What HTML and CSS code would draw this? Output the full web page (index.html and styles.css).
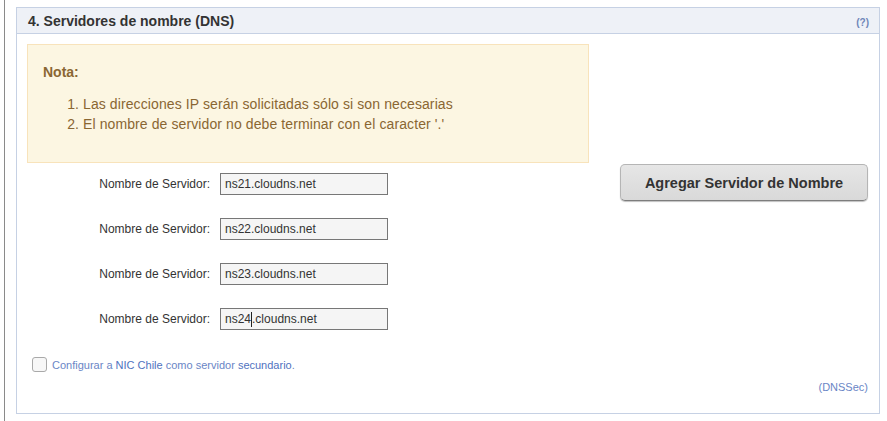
FILE: index.html
```html
<!DOCTYPE html>
<html lang="es">
<head>
<meta charset="utf-8">
<title>Servidores de nombre</title>
<link rel="stylesheet" href="styles.css">
</head>
<body>
<div class="page">
  <section class="panel">
    <header class="panel-head">
      <h2 class="panel-title">4. Servidores de nombre (DNS)</h2>
      <a class="help" href="#">(?)</a>
    </header>
    <div class="panel-body">
      <div class="main">
        <div class="nota">
          <div class="nota-title">Nota:</div>
          <ol class="nota-list">
            <li>Las direcciones IP serán solicitadas sólo si son necesarias</li>
            <li>El nombre de servidor no debe terminar con el caracter '.'</li>
          </ol>
        </div>
        <div class="rows">
          <div class="row"><label class="lbl">Nombre de Servidor:</label><input class="inp" type="text" value="ns21.cloudns.net"></div>
          <div class="row"><label class="lbl">Nombre de Servidor:</label><input class="inp" type="text" value="ns22.cloudns.net"></div>
          <div class="row"><label class="lbl">Nombre de Servidor:</label><input class="inp" type="text" value="ns23.cloudns.net"></div>
          <div class="row"><label class="lbl">Nombre de Servidor:</label><div class="inp fake">ns24<span class="caret"></span>.cloudns.net</div></div>
        </div>
      </div>
      <div class="side">
        <button class="btn" type="button">Agregar Servidor de Nombre</button>
      </div>
    </div>
    <div class="panel-foot">
      <label class="check"><span class="box"></span><span class="check-text">Configurar a <a href="#">NIC Chile</a> como servidor <a href="#">secundario</a>.</span></label>
      <div class="dnssec"><a href="#">(DNSSec)</a></div>
    </div>
  </section>
</div>
</body>
</html>
```
FILE: styles.css
```css
html, body {
  margin: 0;
  padding: 0;
  background: #fff;
  font-family: "Liberation Sans", Arial, sans-serif;
  color: #333;
}
.page {
  margin-left: 4px;
  border-left: 1px solid #8a8a8a;
  padding: 7px 0 0 11px;
  height: 414px;
}
.panel {
  width: 864px;
  box-sizing: border-box;
  border: 1px solid #c6d1e4;
  height: 407px;
  display: flex;
  flex-direction: column;
}
.panel-head {
  height: 25px;
  background: #eef1f7;
  border-bottom: 1px solid #c6d1e4;
  display: flex;
  align-items: center;
  justify-content: space-between;
  padding: 0 10px 0 11px;
}
.panel-title {
  margin: 0;
  font-size: 14px;
  font-weight: bold;
  color: #333;
}
.help {
  font-size: 10px;
  font-weight: bold;
  color: #6f86b9;
  text-decoration: none;
  padding-top: 4px;
}
.panel-body {
  display: flex;
  padding: 10px 10px 0 10px;
}
.main {
  width: 562px;
}
.nota {
  box-sizing: border-box;
  height: 119px;
  background: #fcf6e2;
  border: 1px solid #f8e3bb;
  padding: 18px 0 0 15px;
  color: #8a6632;
}
.nota-title {
  font-size: 14px;
  font-weight: bold;
  line-height: 18px;
}
.nota-list {
  margin: 13px 0 0 0;
  padding-left: 40px;
  font-size: 14px;
  line-height: 20px;
  letter-spacing: 0.1px;
}
.rows {
  display: flex;
  flex-direction: column;
  gap: 23px;
  margin-top: 10px;
}
.row {
  display: flex;
  align-items: center;
  height: 22px;
}
.lbl {
  width: 183px;
  text-align: right;
  font-size: 12px;
  color: #333;
  margin-right: 10px;
}
.inp {
  box-sizing: border-box;
  width: 168px;
  height: 22px;
  border: 1px solid #777;
  background: #f5f5f5;
  font-family: "Liberation Sans", Arial, sans-serif;
  font-size: 12px;
  color: #333;
  padding: 0 4px;
  margin: 0;
  outline: none;
}
.fake {
  display: flex;
  align-items: center;
}
.caret {
  display: inline-block;
  width: 1px;
  height: 15px;
  background: #222;
}
.side {
  padding: 120px 0 0 31px;
}
.btn {
  width: 248px;
  height: 37px;
  border: 1px solid #b5b5b5;
  border-bottom-color: #7d7d7d;
  border-radius: 5px;
  background: linear-gradient(#e6e6e6, #d9d9d9);
  box-shadow: 0 1px 1px rgba(0,0,0,0.25);
  font-family: "Liberation Sans", Arial, sans-serif;
  font-size: 14.5px;
  font-weight: bold;
  color: #333;
  cursor: pointer;
}
.panel-foot {
  padding: 0 11px 0 15px;
  margin-top: 27px;
}
.check {
  display: flex;
  align-items: center;
  font-size: 11px;
  color: #6a86c6;
}
.box {
  box-sizing: border-box;
  width: 15px;
  height: 15px;
  border: 1px solid #a9a9a9;
  border-radius: 3px;
  background: #f7f7f7;
  margin-right: 5px;
}
.check-text a {
  color: #4f72c0;
  text-decoration: none;
}
.dnssec {
  text-align: right;
  font-size: 11px;
  margin-top: 9px;
}
.dnssec a {
  color: #6a86c6;
  text-decoration: none;
}
```
